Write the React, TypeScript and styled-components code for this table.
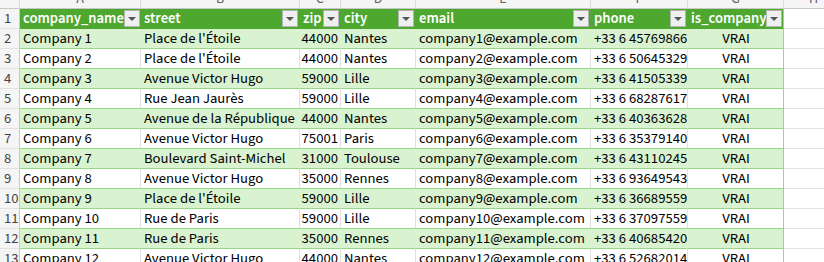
import React from "react";
import styled, { createGlobalStyle } from "styled-components";

const Global = createGlobalStyle`
  html, body { margin: 0; padding: 0; background: #ffffff; overflow: hidden; }
  body { font-family: "Source Sans 3", Carlito, Lato, "Liberation Sans", sans-serif; }
`;

const COLS = [20, 121, 159, 41, 75, 175, 97, 96, 60];

const Sheet = styled.div`
  display: grid;
  grid-template-columns: ${COLS.map((c) => c + "px").join(" ")};
  grid-auto-rows: 20px;
  margin-top: -11px;
  font-size: 14.67px;
  color: #000;
`;

const ColHead = styled.div<{ $last?: boolean }>`
  box-sizing: border-box;
  background: #f5f5f5;
  border-right: 1px solid ${(p) => (p.$last ? "transparent" : "#dadada")};
  border-bottom: 1px solid #c8c8c8;
  color: #616161;
  font-size: 14px;
  display: flex;
  align-items: center;
  justify-content: center;
`;

const Corner = styled(ColHead)`
  background: #f5f5f5;
`;

const RowNum = styled.div`
  box-sizing: border-box;
  background: #f5f5f5;
  border-right: 1px solid #c8c8c8;
  border-bottom: 1px solid #e1e1e1;
  color: #444;
  display: flex;
  align-items: center;
  padding-left: 4px;
`;

const Cell = styled.div<{ $band: boolean; $align?: string; $edge?: boolean }>`
  box-sizing: border-box;
  background: ${(p) => (p.$band ? "#d9f2d0" : "#ffffff")};
  border-bottom: 1px solid #9ad68a;
  border-right: 1px solid
    ${(p) => (p.$edge ? "#9ad68a" : p.$band ? "#d9f2d0" : "#e1e1e1")};
  display: flex;
  align-items: center;
  justify-content: ${(p) => p.$align || "flex-start"};
  padding: 0 2px 0 3px;
  white-space: nowrap;
  overflow: hidden;
`;

const Empty = styled.div`
  box-sizing: border-box;
  border-bottom: 1px solid #e1e1e1;
  border-right: 1px solid #e1e1e1;
`;

const HeadCell = styled.div<{ $edge?: boolean }>`
  box-sizing: border-box;
  background: #4ea72e;
  color: #ffffff;
  font-weight: 600;
  display: flex;
  align-items: center;
  justify-content: space-between;
  padding: 0 1px 0 3px;
  border-bottom: 1px solid #4ea72e;
  border-right: 1px solid ${(p) => (p.$edge ? "#9ad68a" : "#4ea72e")};
  white-space: nowrap;
  overflow: hidden;
`;

const FilterBtn = styled.span`
  box-sizing: border-box;
  width: 16px;
  height: 17px;
  flex: none;
  background: #efefef;
  border: 1px solid #b4b4b4;
  display: flex;
  align-items: center;
  justify-content: center;
  &::after {
    content: "";
    border-left: 4px solid transparent;
    border-right: 4px solid transparent;
    border-top: 4px solid #555;
    margin-top: 1px;
  }
`;

type Row = [string, string, string, string, string, string, string];

const rows: Row[] = [
  ["Company 1", "Place de l'Étoile", "44000", "Nantes", "company1@example.com", "+33 6 45769866", "VRAI"],
  ["Company 2", "Place de l'Étoile", "44000", "Nantes", "company2@example.com", "+33 6 50645329", "VRAI"],
  ["Company 3", "Avenue Victor Hugo", "59000", "Lille", "company3@example.com", "+33 6 41505339", "VRAI"],
  ["Company 4", "Rue Jean Jaurès", "59000", "Lille", "company4@example.com", "+33 6 68287617", "VRAI"],
  ["Company 5", "Avenue de la République", "44000", "Nantes", "company5@example.com", "+33 6 40363628", "VRAI"],
  ["Company 6", "Avenue Victor Hugo", "75001", "Paris", "company6@example.com", "+33 6 35379140", "VRAI"],
  ["Company 7", "Boulevard Saint-Michel", "31000", "Toulouse", "company7@example.com", "+33 6 43110245", "VRAI"],
  ["Company 8", "Avenue Victor Hugo", "35000", "Rennes", "company8@example.com", "+33 6 93649543", "VRAI"],
  ["Company 9", "Place de l'Étoile", "59000", "Lille", "company9@example.com", "+33 6 36689559", "VRAI"],
  ["Company 10", "Rue de Paris", "59000", "Lille", "company10@example.com", "+33 6 37097559", "VRAI"],
  ["Company 11", "Rue de Paris", "35000", "Rennes", "company11@example.com", "+33 6 40685420", "VRAI"],
  ["Company 12", "Avenue Victor Hugo", "44000", "Nantes", "company12@example.com", "+33 6 52682014", "VRAI"],
];

const headers = ["company_name", "street", "zip", "city", "email", "phone", "is_company"];
const letters = ["A", "B", "C", "D", "E", "F", "G", "H"];
const aligns = ["flex-start", "flex-start", "flex-end", "flex-start", "flex-start", "flex-start", "center"];

export default function App() {
  return (
    <>
      <Global />
      <Sheet>
        <Corner />
        {letters.map((l, i) => (
          <ColHead key={l} $last={i === letters.length - 1}>{l}</ColHead>
        ))}
        <RowNum>1</RowNum>
        {headers.map((h, i) => (
          <HeadCell key={h} $edge={i === headers.length - 1}>
            <span>{h}</span>
            <FilterBtn />
          </HeadCell>
        ))}
        <Empty />
        {rows.map((r, ri) => (
          <React.Fragment key={ri}>
            <RowNum>{ri + 2}</RowNum>
            {r.map((v, ci) => (
              <Cell key={ci} $band={ri % 2 === 0} $align={aligns[ci]} $edge={ci === 6}>
                {v}
              </Cell>
            ))}
            <Empty />
          </React.Fragment>
        ))}
      </Sheet>
    </>
  );
}
